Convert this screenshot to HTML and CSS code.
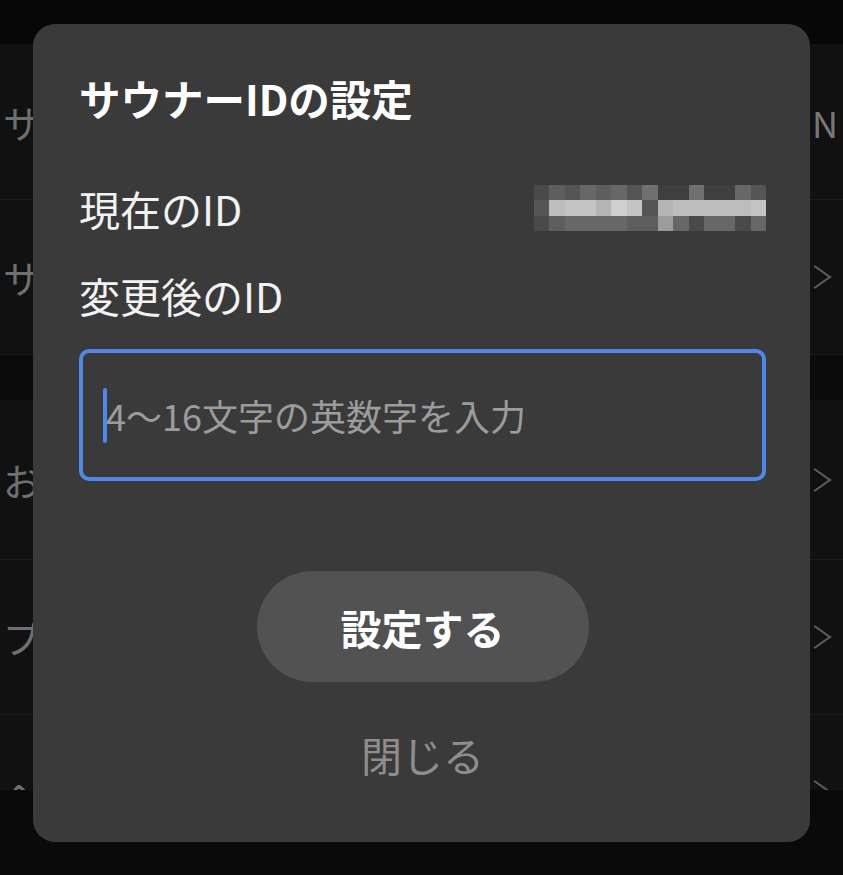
FILE: index.html
```html
<!DOCTYPE html>
<html lang="ja">
<head>
    <meta charset="UTF-8">
    <meta name="viewport" content="width=device-width, initial-scale=1.0">
    <title>サウナーIDの設定</title>
    <link rel="stylesheet" href="styles.css">
</head>
<body>

    <div class="screen">
        <div class="top-bar"></div>

        <!-- settings list behind the dialog -->
        <div class="list">
            <div class="row row-first">
                <span class="row-label">サ</span>
                <span class="row-value">N</span>
            </div>
            <div class="row">
                <span class="row-label">サ</span>
                <span class="chevron"></span>
            </div>
        </div>
        <div class="section-gap"></div>
        <div class="list">
            <div class="row row-tall">
                <span class="row-label">お</span>
                <span class="chevron"></span>
            </div>
            <div class="row">
                <span class="row-label">プ</span>
                <span class="chevron"></span>
            </div>
            <div class="row row-cut">
                <span class="row-label">ヘ</span>
                <span class="chevron"></span>
            </div>
        </div>
        <div class="bottom-bar"></div>

        <!-- dialog -->
        <div class="dialog">
            <h2 class="dialog-title">サウナーIDの設定</h2>

            <div class="field-row">
                <span class="field-label">現在のID</span>
                <div class="masked">
                    <i class="g2"></i><i class="g4"></i><i class="g3"></i><i class="g5"></i><i class="g4"></i><i class="g5"></i><i class="g3"></i><i class="g6"></i><i class="g1"></i><i class="g1"></i><i class="g6"></i><i class="g1"></i><i class="g1"></i><i class="g5"></i><i class="g3"></i>
                    <i class="g3"></i><i class="l2"></i><i class="l3"></i><i class="l3"></i><i class="l1"></i><i class="l4"></i><i class="l3"></i><i class="g3"></i><i class="l1"></i><i class="l2"></i><i class="l2"></i><i class="l2"></i><i class="l2"></i><i class="l2"></i><i class="l3"></i>
                    <i class="g2"></i><i class="g4"></i><i class="g5"></i><i class="g5"></i><i class="g5"></i><i class="g5"></i><i class="g4"></i><i class="g4"></i><i class="m1"></i><i class="g5"></i><i class="g2"></i><i class="g5"></i><i class="g5"></i><i class="g2"></i><i class="g5"></i>
                </div>
            </div>

            <div class="field-label new-label">変更後のID</div>

            <div class="id-input">
                <span class="caret"></span>
                <span class="placeholder">4〜16文字の英数字を入力</span>
            </div>

            <button class="submit-btn">設定する</button>
            <div class="close-link">閉じる</div>
        </div>
    </div>

</body>
</html>
```

FILE: styles.css
```css
body {
    margin: 0;
    padding: 0;
    background-color: #0a0a0a;
    font-family: 'Noto Sans CJK JP', 'Noto Sans', sans-serif;
}

.screen {
    position: relative;
    width: 843px;
    height: 875px;
    overflow: hidden;
    display: flex;
    flex-direction: column;
    background-color: #0a0a0a;
}

.top-bar {
    height: 44px;
    background-color: #070707;
}

.list {
    background-color: #111111;
}

.row {
    height: 155px;
    display: flex;
    align-items: center;
    justify-content: space-between;
    padding: 0 14px 0 3px;
    border-bottom: 1px solid #1b1b1b;
    box-sizing: border-box;
    font-size: 38px;
    color: #707070;
    overflow: hidden;
}

.row-first {
    height: 156px;
}

.row-tall {
    height: 160px;
}

.row-cut {
    height: 75px;
    align-items: flex-start;
    padding-top: 58px;
    border-bottom: none;
}

.row-cut .chevron {
    margin-top: 9px;
}

.row-label {
    white-space: nowrap;
    line-height: 40px;
}

.row-value {
    margin-right: -9px;
    font-size: 36px;
    line-height: 40px;
    color: #777777;
}

.chevron {
    width: 18px;
    height: 18px;
    border-top: 2px solid #5c5c5c;
    border-right: 2px solid #5c5c5c;
    transform: rotate(45deg) skew(-10deg, -10deg);
    margin-right: 4px;
}

.section-gap {
    height: 45px;
    background-color: #0b0b0b;
}

.bottom-bar {
    flex: 1;
    background-color: #0a0a0a;
}

/* dialog */
.dialog {
    position: absolute;
    left: 33px;
    top: 24px;
    width: 777px;
    height: 818px;
    box-sizing: border-box;
    padding: 50px 44px 0 46px;
    background-color: #3a3a3a;
    border-radius: 22px;
    display: flex;
    flex-direction: column;
    color: #ffffff;
}

.dialog-title {
    margin: 0;
    font-size: 41.5px;
    line-height: 48px;
    font-weight: bold;
    color: #ffffff;
}

.field-row {
    margin-top: 62px;
    display: flex;
    align-items: center;
    justify-content: space-between;
}

.field-label {
    font-size: 41px;
    line-height: 48px;
    color: #f2f2f2;
}

.new-label {
    margin-top: 39px;
}

.masked {
    width: 232px;
    height: 46px;
    display: grid;
    grid-template-columns: repeat(15, 1fr);
    grid-template-rows: repeat(3, 1fr);
    filter: blur(0.7px);
}

.masked i {
    display: block;
}

.g1 { background-color: #3f3f3f; }
.g2 { background-color: #4a4a4a; }
.g3 { background-color: #555555; }
.g4 { background-color: #5e5e5e; }
.g5 { background-color: #676767; }
.g6 { background-color: #707070; }
.m1 { background-color: #9c9c9c; }
.l1 { background-color: #b4b4b4; }
.l2 { background-color: #bdbdbd; }
.l3 { background-color: #c4c4c4; }
.l4 { background-color: #cfcfcf; }

.id-input {
    margin-top: 30px;
    height: 132px;
    box-sizing: border-box;
    border: 4px solid #4c89ea;
    border-radius: 10px;
    display: flex;
    align-items: center;
    padding-left: 20px;
}

.caret {
    width: 4px;
    height: 55px;
    background-color: #4c89ea;
    border-radius: 2px;
    margin-right: -1px;
}

.placeholder {
    font-size: 36px;
    line-height: 44px;
    color: #9c9c9c;
}

.submit-btn {
    align-self: center;
    margin-top: 90px;
    width: 332px;
    height: 111px;
    border: none;
    border-radius: 56px;
    background-color: #525252;
    color: #ffffff;
    font-family: inherit;
    font-size: 41px;
    font-weight: bold;
    cursor: pointer;
}

.close-link {
    align-self: center;
    margin-top: 48px;
    font-size: 41px;
    line-height: 48px;
    color: #8e8e8e;
    cursor: pointer;
}
```
